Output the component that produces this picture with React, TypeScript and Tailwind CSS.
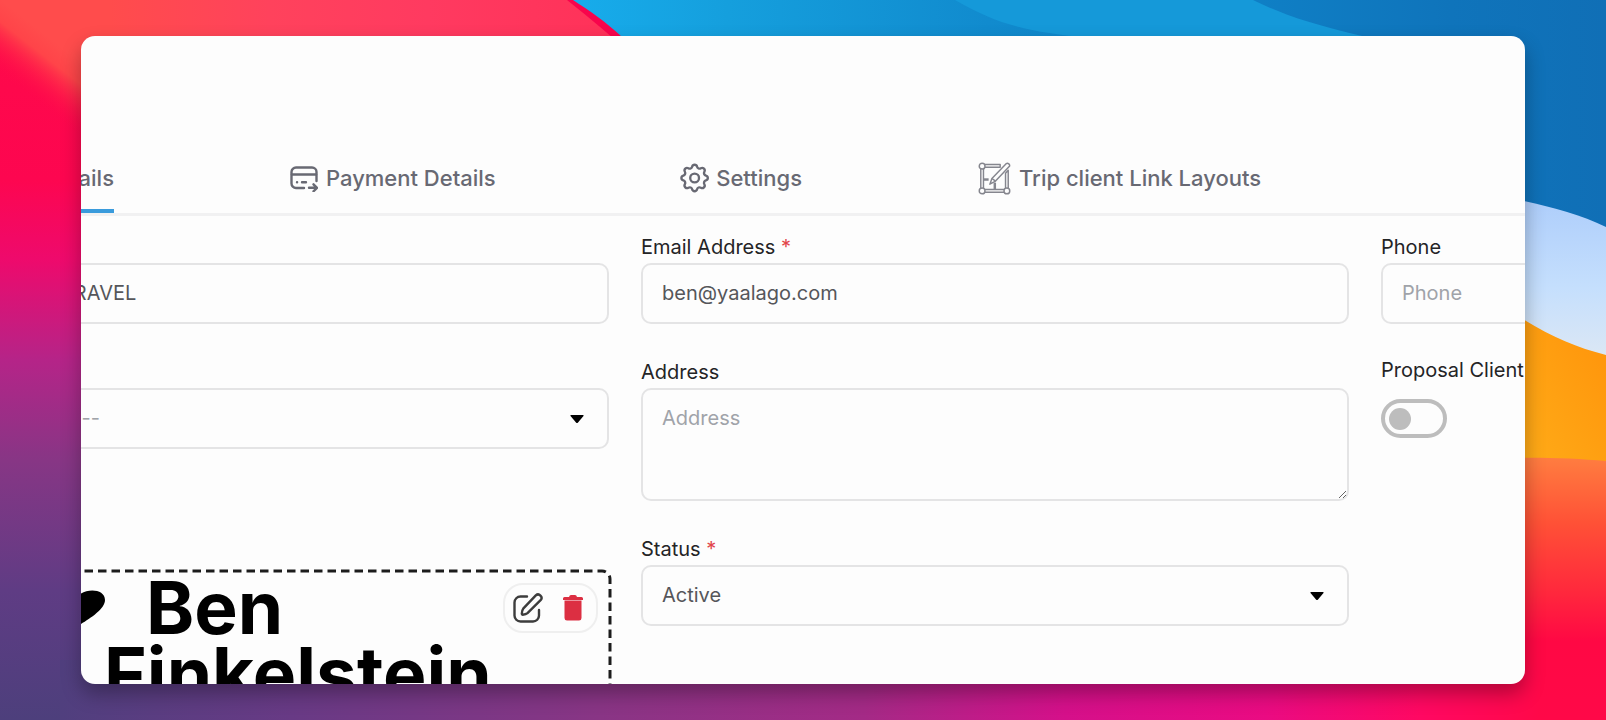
import React, { useState } from "react";
import { TbSettings } from "react-icons/tb";

const boxClass =
  "block w-full rounded-[10px] border-2 border-[#e4e4e5] bg-[#fdfdfd] px-[19px] pb-[2px] text-[20px] outline-none placeholder:text-[#a0a3a9] focus:border-sky-400";

function Wallpaper() {
  return (
    <svg
      className="absolute inset-0 h-full w-full"
      viewBox="0 0 1606 720"
      preserveAspectRatio="none"
      aria-hidden="true"
    >
      <defs>
        <linearGradient id="leftSide" x1="0" y1="0" x2="0" y2="1">
          <stop offset="0" stopColor="#ff0a48" />
          <stop offset="0.25" stopColor="#fd0650" />
          <stop offset="0.36" stopColor="#ee0a6c" />
          <stop offset="0.5" stopColor="#b52488" />
          <stop offset="0.64" stopColor="#873685" />
          <stop offset="0.82" stopColor="#5f3c84" />
          <stop offset="1" stopColor="#4d3f7c" />
        </linearGradient>
        <linearGradient
          id="corner"
          gradientUnits="userSpaceOnUse"
          x1="60"
          y1="46"
          x2="24"
          y2="92"
        >
          <stop offset="0" stopColor="#ff4c4c" />
          <stop offset="0.3" stopColor="#ff4449" />
          <stop offset="1" stopColor="#ff0a48" stopOpacity="0" />
        </linearGradient>
        <linearGradient id="topRed" x1="0" y1="0" x2="1" y2="0">
          <stop offset="0" stopColor="#ff4c4c" />
          <stop offset="0.3" stopColor="#ff425c" />
          <stop offset="0.6" stopColor="#ff3a60" />
          <stop offset="1" stopColor="#ff3058" />
        </linearGradient>
        <linearGradient id="sky" x1="0" y1="0" x2="1" y2="0">
          <stop offset="0" stopColor="#17aceb" />
          <stop offset="0.15" stopColor="#159fdd" />
          <stop offset="0.4" stopColor="#118bce" />
          <stop offset="0.65" stopColor="#0f80c6" />
          <stop offset="0.85" stopColor="#0f74bb" />
          <stop offset="1" stopColor="#106fb6" />
        </linearGradient>
        <linearGradient id="floor" x1="0" y1="0" x2="1" y2="0">
          <stop offset="0" stopColor="#503f7e" />
          <stop offset="0.15" stopColor="#683a85" />
          <stop offset="0.35" stopColor="#893585" />
          <stop offset="0.52" stopColor="#a42a86" />
          <stop offset="0.65" stopColor="#d5108a" />
          <stop offset="0.78" stopColor="#ea0b82" />
          <stop offset="0.88" stopColor="#ff0862" />
          <stop offset="0.96" stopColor="#ff0848" />
        </linearGradient>
        <linearGradient id="cloud" x1="0" y1="0" x2="0" y2="1">
          <stop offset="0" stopColor="#adcdfb" />
          <stop offset="0.5" stopColor="#c5dffd" />
          <stop offset="1" stopColor="#e3eaf2" />
        </linearGradient>
        <linearGradient id="amber" x1="0" y1="1" x2="1" y2="0">
          <stop offset="0" stopColor="#ffb01a" />
          <stop offset="1" stopColor="#ff920a" />
        </linearGradient>
        <linearGradient id="coral" x1="0" y1="0" x2="0" y2="1">
          <stop offset="0" stopColor="#ff7d40" />
          <stop offset="0.25" stopColor="#ff5136" />
          <stop offset="0.5" stopColor="#ff2a3c" />
          <stop offset="0.7" stopColor="#ff0844" />
          <stop offset="1" stopColor="#ff0848" />
        </linearGradient>
      </defs>
      <rect width="803" height="720" fill="url(#leftSide)" />
      <path d="M0 0H160V300H0Z" fill="url(#corner)" />
      <path d="M110 0H574L640 60H110Z" fill="url(#topRed)" />
      <path d="M567 0H580L660 60H638Q600 26 567 0Z" fill="#f8044c" />
      <path d="M573 0C590 11 606 22 622 37L650 70V400H1606V0Z" fill="url(#sky)" />
      <path
        d="M955 0C1000 26 1030 32 1090 38H1370C1320 26 1290 18 1253 0Z"
        fill="#1599d9"
      />
      <rect x="60" y="660" width="1546" height="60" fill="url(#floor)" />
      <path d="M1500 196C1540 204 1575 212 1606 227V380H1500Z" fill="url(#cloud)" />
      <path d="M1500 304C1540 332 1570 346 1606 355V480H1500Z" fill="url(#amber)" />
      <path d="M1500 458C1540 457 1575 458 1606 461V720H1540V670H1500Z" fill="url(#coral)" />
    </svg>
  );
}

function CardIcon() {
  return (
    <svg
      className="h-7 w-7"
      viewBox="0 0 28 28"
      fill="none"
      stroke="currentColor"
      strokeWidth="2.4"
      strokeLinecap="round"
      strokeLinejoin="round"
      aria-hidden="true"
    >
      <path d="M14 24H6a4.5 4.5 0 0 1-4.500-4.500V8A4.500 4.500 0 0 1 6 3.500h16A4.500 4.500 0 0 1 26.500 8v9" />
      <path d="M2 10.500h24" />
      <path d="M7 18.200h.1M12 18.200h4" />
      <path d="M19 23.800h7.500M23.500 20.300l3.500 3.500-3.500 3.500" />
    </svg>
  );
}

function LayoutIcon() {
  return (
    <svg
      className="h-[33px] w-[33px]"
      viewBox="0 0 32 32"
      fill="none"
      stroke="currentColor"
      strokeWidth="1.400"
      strokeLinejoin="round"
      opacity="0.8"
      aria-hidden="true"
    >
      <path d="M6 2.500h15.500v2.600H6zM2.700 6h2.600v20H2.700zM6 26.700h20v2.600H6zM26.700 11l2.600-3v18h-2.600z" />
      <path d="M5.300 17h5" strokeWidth="2.400" />
      <path d="M16.300 20v6.500" strokeWidth="2.400" />
      <path d="M11.500 21.500l2-5.500L27.500 1.500c1.500-1 3.800 1 3 2.700L17 18.500z" fill="#fdfdfd" />
      <path d="M13.500 16l3.500 2.500" />
      <circle cx="4" cy="4" r="2.800" fill="#fdfdfd" />
      <circle cx="4" cy="28" r="2.800" fill="#fdfdfd" />
      <circle cx="28" cy="28" r="2.800" fill="#fdfdfd" />
    </svg>
  );
}

function Caret() {
  return (
    <svg
      className="pointer-events-none absolute top-1/2 right-[25px] h-2 w-[14px] -translate-y-1/2"
      viewBox="0 0 14 8"
      aria-hidden="true"
    >
      <path d="M1 0h12q1 0 .5 1L8 7.500q-1 1-2 0L.5 1Q0 0 1 0z" fill="#000" />
    </svg>
  );
}

type FieldProps = {
  id: string;
  label: string;
  required?: boolean;
  children: React.ReactNode;
};

function Field({ id, label, required, children }: FieldProps) {
  return (
    <div>
      <label
        htmlFor={id}
        className="block h-8 text-[20px] leading-8 whitespace-nowrap text-[#242426]"
      >
        {label} {required && <span className="text-[#e2444a]">*</span>}
      </label>
      {children}
    </div>
  );
}

function Tabs() {
  const tabClass = "flex h-full shrink-0 items-center gap-2 pb-1";
  return (
    <nav className="flex h-[69px] gap-44 border-b-3 border-[#f1f1f2] text-[22px] font-medium whitespace-nowrap text-[#686973]">
      <button className="flex h-full w-[213px] shrink-0 items-center justify-end border-b-4 border-[#3a9bdc]">
        Company Details
      </button>
      <button className={tabClass + " w-[215px]"}>
        <CardIcon />
        Payment Details
      </button>
      <button className={tabClass + " w-[121px]"}>
        <TbSettings className="-mx-1 h-9 w-9" strokeWidth={1.6} />
        Settings
      </button>
      <button className={tabClass}>
        <LayoutIcon />
        Trip client Link Layouts
      </button>
    </nav>
  );
}

function LogoUpload() {
  return (
    <div className="relative mt-[90px] -mr-px h-80">
      <svg className="absolute inset-0 h-full w-full overflow-visible" aria-hidden="true">
        <rect
          width="100%"
          height="100%"
          rx="8"
          fill="none"
          stroke="#1c1c1c"
          strokeWidth="3"
          strokeDasharray="8.500 5"
        />
      </svg>
      <div className="pt-1 pl-[203px] text-[73px] leading-[66px] font-bold text-black">
        <div className="-ml-[53px] flex items-center gap-[41px]">
          <svg className="h-9 w-[54px]" viewBox="0 0 54 36" aria-hidden="true">
            <path d="M27 6C20-2 0-2 0 10c0 10 18 20 27 26 9-6 27-16 27-26C54-2 34-2 27 6z" />
          </svg>
          Ben
        </div>
        <div>Finkelstein</div>
      </div>
      <div className="absolute top-3 right-3 flex h-[50px] w-[95px] items-center justify-between rounded-[20px] border-2 border-[#efefef] bg-[#fdfdfd] pr-[13px] pl-2">
        <button aria-label="Edit logo">
          <svg
            className="h-[30px] w-[30px]"
            viewBox="0 0 30 30"
            fill="none"
            stroke="#3d3d3d"
            strokeWidth="2.400"
            strokeLinecap="round"
            strokeLinejoin="round"
          >
            <path d="M14 3.500H7.500a6 6 0 0 0-6 6V22.500a6 6 0 0 0 6 6H20a6 6 0 0 0 6-6V17" />
            <path d="M22.800 2.400a3.400 3.400 0 0 1 4.800 4.800L14.500 20.200q-1.500 1.400-4.800 1.500-.9-.1-.9-1 .1-3.500 1.400-5z" />
          </svg>
        </button>
        <button aria-label="Delete logo">
          <svg className="h-7 w-5" viewBox="0 0 20 28" fill="#dc2f42">
            <path d="M0 4.500Q0 3 1.500 3H6q.5-2 2-2h4q1.500 0 2 2h4.500Q20 3 20 4.500V6H0z" />
            <path d="M1.500 6.500h17V24q-.1 2.500-2.500 2.500H4Q1.600 26.500 1.500 24z" />
          </svg>
        </button>
      </div>
    </div>
  );
}

function App() {
  const [company, setCompany] = useState("BEN & FINKEL TRAVEL");
  const [email, setEmail] = useState("ben@yaalago.com");
  const [status, setStatus] = useState("Active");
  const [proposal, setProposal] = useState(false);

  return (
    <div className="relative h-screen overflow-hidden px-[81px] py-9 font-[Inter,sans-serif]">
      <Wallpaper />
      <main className="relative h-full overflow-hidden rounded-[14px] bg-[#fdfdfd] shadow-[0_10px_20px_rgba(0,0,0,0.3)]">
        <div className="-ml-[180px] w-[calc(150%+22px)] pt-[111px]">
          <Tabs />
          <form className="grid grid-cols-3 items-start gap-8 pt-[15px]">
            <div className="flex flex-col gap-8">
              <Field id="company" label="Company" required>
                <input
                  id="company"
                  className={boxClass + " h-[61px] text-[#55565a]"}
                  value={company}
                  onChange={(e) => setCompany(e.target.value)}
                />
              </Field>
              <Field id="county" label="County">
                <div className="relative">
                  <select
                    id="county"
                    className={boxClass + " h-[61px] appearance-none text-[#a0a3a9]"}
                  >
                    <option>-- Select county --</option>
                  </select>
                  <Caret />
                </div>
              </Field>
              <LogoUpload />
            </div>

            <div className="flex flex-col gap-8">
              <Field id="email" label="Email Address" required>
                <input
                  id="email"
                  type="email"
                  className={boxClass + " h-[61px] text-[#55565a]"}
                  value={email}
                  onChange={(e) => setEmail(e.target.value)}
                />
              </Field>
              <Field id="address" label="Address">
                <textarea
                  id="address"
                  placeholder="Address"
                  className={boxClass + " h-[113px] resize-y pt-[13px] text-[#55565a]"}
                />
              </Field>
              <Field id="status" label="Status" required>
                <div className="relative">
                  <select
                    id="status"
                    className={boxClass + " h-[61px] appearance-none text-[#55565a]"}
                    value={status}
                    onChange={(e) => setStatus(e.target.value)}
                  >
                    <option>Active</option>
                    <option>Inactive</option>
                  </select>
                  <Caret />
                </div>
              </Field>
            </div>

            <div className="flex flex-col gap-[30px]">
              <Field id="phone" label="Phone">
                <input
                  id="phone"
                  type="tel"
                  placeholder="Phone"
                  className={boxClass + " h-[61px] text-[#55565a]"}
                />
              </Field>
              <Field id="proposal" label="Proposal Client">
                <input
                  id="proposal"
                  type="checkbox"
                  checked={proposal}
                  onChange={(e) => setProposal(e.target.checked)}
                  className="mt-[13px] flex h-[39px] w-[66px] appearance-none items-center rounded-full border-4 border-[#bdbdbd] px-1 before:h-[22px] before:w-[22px] before:rounded-full before:bg-[#bdbdbd] checked:justify-end"
                />
              </Field>
            </div>
          </form>
        </div>
      </main>
    </div>
  );
}

export default App;
